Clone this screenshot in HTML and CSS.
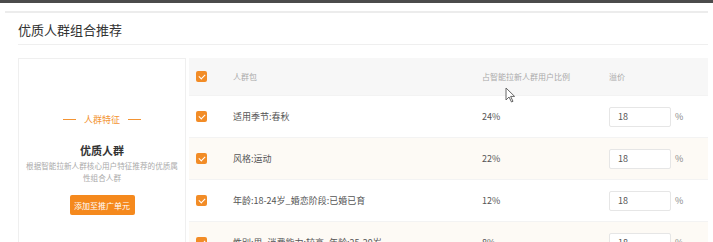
FILE: index.html
```html
<!DOCTYPE html>
<html lang="zh-CN">
<head>
    <meta charset="UTF-8">
    <meta name="viewport" content="width=device-width, initial-scale=1.0">
    <title>优质人群组合推荐</title>
    <link rel="stylesheet" href="styles.css">
</head>
<body>
    <div class="topbar"></div>

    <div class="card">
        <h3 class="card-title">优质人群组合推荐</h3>

        <div class="content">
            <!-- 左侧 人群特征 -->
            <div class="side">
                <div class="side-tag"><span class="dash"></span>人群特征<span class="dash"></span></div>
                <div class="side-name">优质人群</div>
                <p class="side-desc">根据智能拉新人群核心用户特征推荐的优质属性组合人群</p>
                <button type="button" class="btn-add">添加至推广单元</button>
            </div>

            <!-- 右侧 表格 -->
            <div class="grid">
                <div class="row head">
                    <span class="chk"></span>
                    <span>人群包</span>
                    <span>占智能拉新人群用户比例</span>
                    <span>溢价</span>
                </div>
                <div class="row">
                    <span class="chk"></span>
                    <span>适用季节:春秋</span>
                    <span>24%</span>
                    <span class="price"><input type="text" value="18"> %</span>
                </div>
                <div class="row warm">
                    <span class="chk"></span>
                    <span>风格:运动</span>
                    <span>22%</span>
                    <span class="price"><input type="text" value="18"> %</span>
                </div>
                <div class="row">
                    <span class="chk"></span>
                    <span>年龄:18-24岁_婚恋阶段:已婚已育</span>
                    <span>12%</span>
                    <span class="price"><input type="text" value="18"> %</span>
                </div>
                <div class="row warm">
                    <span class="chk"></span>
                    <span>性别:男_消费能力:较高_年龄:25-29岁</span>
                    <span>8%</span>
                    <span class="price"><input type="text" value="18"> %</span>
                </div>
            </div>
        </div>
    </div>

    <svg class="cursor" width="11" height="16" viewBox="0 0 11 16">
        <path d="M1 1 L1 13 L4 10 L6.5 15 L8 14.3 L5.6 9.4 L9.6 9.4 Z" fill="#fff" stroke="#666" stroke-width="1"/>
    </svg>
</body>
</html>
```

FILE: styles.css
```css
body {
    margin: 0;
    background: #fff;
    font-family: "Noto Sans CJK SC", "Liberation Sans", sans-serif;
    color: #555;
    overflow: hidden;
    height: 242px;
}

.topbar {
    height: 3px;
    background: #4b4b4b;
}

/* 卡片 */
.card {
    margin: 8px 5px 0 5px;
    padding-left: 13px;
    border-top: 2px solid #ececec;
    background: #fff;
}

.card-title {
    margin: 0;
    height: 31px;
    line-height: 33px;
    font-size: 13px;
    font-weight: normal;
    color: #333;
    border-bottom: 1px solid #efefef;
}

.content {
    display: flex;
    margin-top: 13px;
}

/* 左侧 */
.side {
    width: 168px;
    height: 200px;
    border: 1px solid #efefef;
    text-align: center;
    padding-top: 53px;
    box-sizing: border-box;
    background: #fff;
}

.side-tag {
    display: flex;
    align-items: center;
    justify-content: center;
    gap: 8px;
    font-size: 9px;
    color: #f39433;
    height: 14px;
}

.side-tag .dash {
    width: 13px;
    height: 1px;
    background: #f39433;
}

.side-name {
    margin-top: 16px;
    font-size: 11px;
    font-weight: bold;
    color: #333;
}

.side-desc {
    margin: 2px auto 0;
    width: 156px;
    font-size: 7.6px;
    line-height: 12px;
    color: #aaa;
}

.btn-add {
    margin-top: 11px;
    width: 65px;
    height: 20px;
    padding: 0;
    border: none;
    border-radius: 2px;
    background: #f5891d;
    color: #fff;
    font-family: inherit;
    font-size: 8px;
}

/* 表格 */
.grid {
    flex: 1;
    margin-left: 3px;
}

.row {
    display: grid;
    grid-template-columns: 44px 249px 127px 1fr;
    align-items: center;
    height: 41px;
    border-bottom: 1px solid #f3f3f3;
    font-size: 9px;
    color: #555;
}

.row.head {
    height: 37px;
    background: #f7f7f7;
    color: #aaa;
    font-size: 8px;
}

.row.warm {
    background: #fdfaf5;
}

.chk {
    width: 11px;
    height: 11px;
    margin-left: 7px;
    border-radius: 2px;
    background: #f28c26;
    position: relative;
}

.chk::after {
    content: "";
    position: absolute;
    left: 3.5px;
    top: 1.5px;
    width: 3px;
    height: 5px;
    border: solid #fff;
    border-width: 0 1.5px 1.5px 0;
    transform: rotate(45deg);
}

.price {
    display: flex;
    align-items: center;
    gap: 4px;
    color: #888;
}

.price input {
    width: 62px;
    height: 20px;
    box-sizing: border-box;
    border: 1px solid #e6e6e6;
    border-radius: 2px;
    padding: 0 8px;
    font-family: inherit;
    font-size: 9px;
    color: #555;
    background: #fff;
}

.cursor {
    position: absolute;
    left: 505px;
    top: 87px;
}
```
